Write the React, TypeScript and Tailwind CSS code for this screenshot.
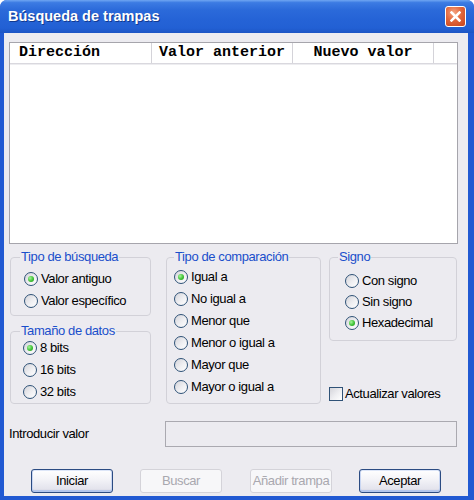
import React from "react";

function Radio({ label, checked, h = "h-[22px]" }: { label: string; checked?: boolean; h?: string }) {
  return (
    <div className={`flex items-center gap-[3px] ${h}`}>
      <span className="w-[14px] h-[14px] rounded-full border border-[#2F5277] bg-[linear-gradient(135deg,#D4D4DA_0%,#EFEFF2_55%,#FFFFFF_100%)] flex items-center justify-center shrink-0">
        {checked && (
          <span className="w-[6px] h-[6px] rounded-full bg-[radial-gradient(circle_at_35%_35%,#A6F59A_0%,#3FC236_55%,#1E8E1A_100%)]" />
        )}
      </span>
      <span className="text-black whitespace-nowrap">{label}</span>
    </div>
  );
}

function Group({
  title,
  legendClass,
  className,
  children,
}: {
  title: string;
  legendClass: string;
  className: string;
  children: React.ReactNode;
}) {
  return (
    <fieldset className={`min-w-0 border border-[#D2D1D8] rounded-[4px] ${className}`}>
      <legend className={`px-[1px] leading-[14px] text-[#1A4FCB] ${legendClass}`}>{title}</legend>
      {children}
    </fieldset>
  );
}

function Button({ label, disabled }: { label: string; disabled?: boolean }) {
  if (disabled) {
    return (
      <div className="w-[82px] h-[24px] flex items-center justify-center border border-[#D4D3D9] rounded-[3px] bg-[#F7F7F9] text-[#A9A8AF]">
        {label}
      </div>
    );
  }
  return (
    <div className="w-[82px] h-[24px] flex items-center justify-center border border-[#2B4B82] rounded-[3px] bg-[linear-gradient(to_bottom,#FFFFFF_0%,#F4F4F8_40%,#E4E4ED_85%,#D0D0DE_100%)] shadow-[inset_0_-2px_0_#B4C6EC,inset_1px_0_0_#C9D6F2,inset_-1px_0_0_#C9D6F2,inset_0_1px_0_#DDE6F8] text-black">
      {label}
    </div>
  );
}

export default function App() {
  return (
    <div className="w-[474px] h-[500px] bg-white font-['Liberation_Sans',Arial,sans-serif] text-[13px] tracking-[-0.4px]">
      <div className="w-full h-full flex flex-col rounded-t-[7px] bg-[#2159D2] overflow-hidden">
        {/* Title bar */}
        <div className="h-[33px] shrink-0 flex items-center pl-[8px] pr-[8px] bg-[linear-gradient(to_bottom,#6FA6F2_0%,#3C7BE3_8%,#2B6ADA_30%,#2563D6_60%,#2260D4_85%,#1C54C4_100%)]">
          <span className="text-white font-bold text-[14.5px] tracking-[0px] [text-shadow:1px_1px_0_#12398F]">
            Búsqueda de trampas
          </span>
          <div className="ml-auto w-[21px] h-[21px] rounded-[3px] border border-white bg-[radial-gradient(circle_at_40%_30%,#F5A582_0%,#E2673D_45%,#C8431A_100%)] flex items-center justify-center">
            <svg width="11" height="11" viewBox="0 0 11 11">
              <path d="M1.5 1.5 L9.5 9.5 M9.5 1.5 L1.5 9.5" stroke="white" strokeWidth="2.5" strokeLinecap="square" />
            </svg>
          </div>
        </div>

        {/* Body */}
        <div className="flex-1 ml-[4px] mr-[6px] mb-[4px] bg-[#ECEBF0] px-[5px] pt-[9px] flex flex-col">
          {/* List view */}
          <div className="w-[449px] h-[202px] border border-[#A6A5AC] bg-white flex flex-col">
            <div className="h-[21px] flex border-b border-[#D9D8DE] shadow-[0_1px_0_#EDEDF0] font-['Liberation_Mono',monospace] font-bold text-[15px] tracking-[0px] text-black">
              <div className="w-[142px] h-full flex items-center pl-[9px] border-r border-[#D4D3D9]">Dirección</div>
              <div className="w-[141px] h-full flex items-center pl-[7px] border-r border-[#D4D3D9]">Valor anterior</div>
              <div className="w-[141px] h-full flex items-center justify-center border-r border-[#D4D3D9]">Nuevo valor</div>
              <div className="flex-1" />
            </div>
          </div>

          {/* Groups */}
          <div className="flex items-start mt-[6px] ml-[1px]">
            <div className="w-[141px] flex flex-col gap-[8px]">
              <Group title="Tipo de búsqueda" legendClass="ml-[9px]" className="h-[66px]">
                <div className="mt-[4px] pl-[13px]">
                  <Radio label="Valor antiguo" checked />
                  <Radio label="Valor específico" />
                </div>
              </Group>
              <Group title="Tamaño de datos" legendClass="ml-[9px]" className="h-[80px]">
                <div className="-mt-[1px] pl-[12px]">
                  <Radio label="8 bits" checked />
                  <Radio label="16 bits" />
                  <Radio label="32 bits" />
                </div>
              </Group>
            </div>

            <Group title="Tipo de comparación" legendClass="ml-[7px]" className="ml-[15px] w-[155px] h-[154px]">
              <div className="mt-[2px] pl-[7px]">
                <Radio label="Igual a" checked />
                <Radio label="No igual a" />
                <Radio label="Menor que" />
                <Radio label="Menor o igual a" />
                <Radio label="Mayor que" />
                <Radio label="Mayor o igual a" />
              </div>
            </Group>

            <div className="ml-[8px] w-[128px] flex flex-col">
              <Group title="Signo" legendClass="ml-[8px]" className="h-[91px]">
                <div className="mt-[6px] pl-[15px]">
                  <Radio label="Con signo" h="h-[21px]" />
                  <Radio label="Sin signo" h="h-[21px]" />
                  <Radio label="Hexadecimal" checked h="h-[21px]" />
                </div>
              </Group>
              <div className="mt-[45px] h-[15px] flex items-center gap-[2px]">
                <span className="w-[14px] h-[14px] border border-[#2F5277] bg-[linear-gradient(135deg,#D4D4DA_0%,#EFEFF2_55%,#FFFFFF_100%)] shrink-0" />
                <span className="text-black whitespace-nowrap">Actualizar valores</span>
              </div>
            </div>
          </div>

          {/* Input row */}
          <div className="mt-[17px] h-[26px] flex items-center">
            <div className="w-[156px] text-black">Introducir valor</div>
            <div className="w-[292px] h-[26px] border border-[#AAA9B0] bg-[#ECEBF0]" />
          </div>

          {/* Buttons */}
          <div className="mt-[22px] flex">
            <div className="ml-[22px]">
              <Button label="Iniciar" />
            </div>
            <div className="ml-[27px]">
              <Button label="Buscar" disabled />
            </div>
            <div className="ml-[28px]">
              <Button label="Añadir trampa" disabled />
            </div>
            <div className="ml-[27px]">
              <Button label="Aceptar" />
            </div>
          </div>
        </div>
      </div>
    </div>
  );
}
